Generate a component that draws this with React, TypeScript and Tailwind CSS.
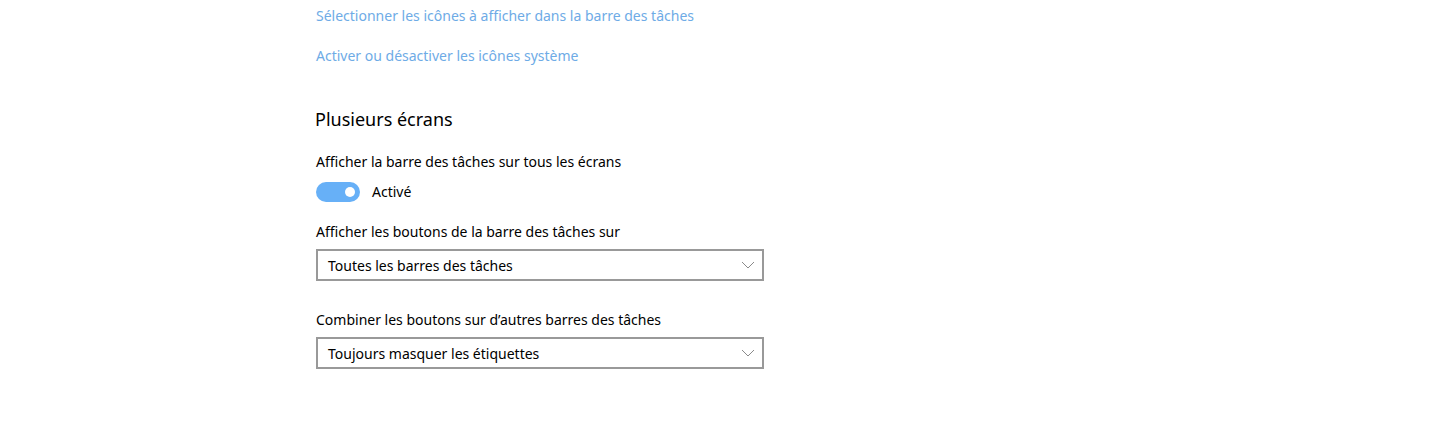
import React from "react";

const font = { fontFamily: '"Segoe UI", "Noto Sans", "Open Sans", sans-serif' };

function Chevron() {
  return (
    <svg width="14" height="8" viewBox="0 0 14 8" className="shrink-0">
      <path d="M1 1 L7 7 L13 1" fill="none" stroke="#8a8a8a" strokeWidth="1" />
    </svg>
  );
}

function Select({ value }: { value: string }) {
  return (
    <div className="flex h-[32px] w-[448px] items-center justify-between border-2 border-[#999999] bg-white pl-[10px] pr-[7px] text-[14px] text-black">
      <span>{value}</span>
      <Chevron />
    </div>
  );
}

export default function App() {
  return (
    <div className="h-[424px] w-[1453px] bg-white" style={font}>
      <div className="flex flex-col pl-[316px]">
        <a className="mt-[5px] h-[22px] leading-[22px] text-[14px] text-[#6eabe6]">
          Sélectionner les icônes à afficher dans la barre des tâches
        </a>
        <a className="mt-[18px] h-[22px] leading-[22px] text-[14px] text-[#6eabe6]">
          Activer ou désactiver les icônes système
        </a>
        <h2 className="-ml-[1px] mt-[38px] h-[28px] leading-[28px] text-[18px] text-black">
          Plusieurs écrans
        </h2>
        <div className="mt-[19px] h-[20px] leading-[20px] text-[14px] text-black">
          Afficher la barre des tâches sur tous les écrans
        </div>
        <div className="mt-[10px] flex items-center gap-[12px]">
          <div className="flex h-[20px] w-[44px] items-center justify-end rounded-full bg-[#67b0f7] pr-[5px]">
            <div className="h-[10px] w-[10px] rounded-full bg-white" />
          </div>
          <span className="text-[14px] leading-[20px] text-black">Activé</span>
        </div>
        <div className="mt-[20px] h-[20px] leading-[20px] text-[14px] text-black">
          Afficher les boutons de la barre des tâches sur
        </div>
        <div className="mt-[7px]">
          <Select value="Toutes les barres des tâches" />
        </div>
        <div className="mt-[29px] h-[20px] leading-[20px] text-[14px] text-black">
          Combiner les boutons sur d’autres barres des tâches
        </div>
        <div className="mt-[7px]">
          <Select value="Toujours masquer les étiquettes" />
        </div>
      </div>
    </div>
  );
}
